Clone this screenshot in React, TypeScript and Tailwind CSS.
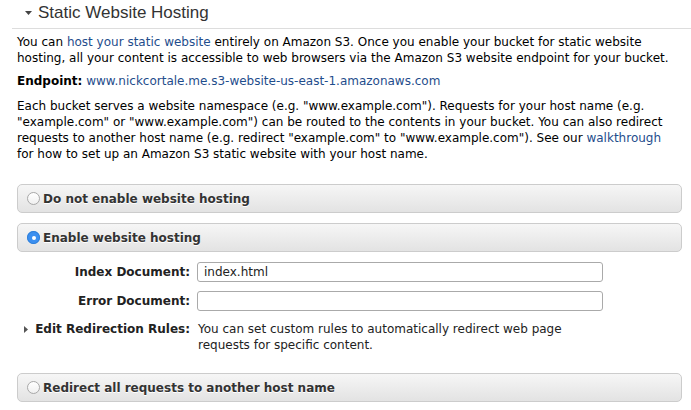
import React from "react";

const verdana = { fontFamily: '"DejaVu Sans", Verdana, sans-serif' };

function Radio({ checked }: { checked?: boolean }) {
  if (checked) {
    return (
      <span className="flex h-[13px] w-[13px] shrink-0 items-center justify-center rounded-full bg-[#3b8ff0] shadow-[inset_0_0_0_1px_#2f7fd8]">
        <span className="h-[4px] w-[4px] rounded-full bg-white" />
      </span>
    );
  }
  return (
    <span className="h-[13px] w-[13px] shrink-0 rounded-full border border-[#a8a8a8] bg-gradient-to-b from-white to-[#f0f0f0]" />
  );
}

function OptionBox({ label, checked, className }: { label: string; checked?: boolean; className?: string }) {
  return (
    <div
      className={
        "flex h-[29px] w-[665px] items-center gap-[3px] rounded-[5px] border border-[#cccccc] bg-gradient-to-b from-[#f6f6f6] to-[#e3e3e3] pl-[9px] " +
        (className ?? "")
      }
    >
      <Radio checked={checked} />
      <span className="whitespace-nowrap text-[12px] font-bold text-[#333] [text-shadow:0_1px_0_#fff]" style={verdana}>
        {label}
      </span>
    </div>
  );
}

export default function App() {
  return (
    <div className="h-[410px] w-[691px] overflow-hidden bg-white text-[#000]" style={verdana}>
      <div className="ml-[12px] flex h-[29px] items-center border-b border-[#dddddd] pl-[13px] pb-[3px]">
        <svg width="7" height="4" viewBox="0 0 7 4" className="mr-[6px]">
          <polygon points="0,0 7,0 3.5,4" fill="#444" />
        </svg>
        <span className="text-[17px] text-[#333]" style={{ fontFamily: '"Liberation Sans", Arial, sans-serif' }}>
          Static Website Hosting
        </span>
      </div>
      <div className="px-[17px]">
        <p className="mt-[5px] text-[12px] leading-[16px]">
          You can <span className="text-[#1f4d8c]">host your static website</span> entirely on Amazon S3. Once you enable your bucket for static website hosting, all your content is accessible to web browsers via the Amazon S3 website endpoint for your bucket.
        </p>
        <p className="mt-[7px] text-[12px] leading-[16px]">
          <span className="font-bold">Endpoint:</span>{" "}
          <span className="text-[#1f4d8c]">www.nickcortale.me.s3-website-us-east-1.amazonaws.com</span>
        </p>
        <p className="mt-[9px] text-[12px] leading-[16px]">
          Each bucket serves a website namespace (e.g. "www.example.com"). Requests for your host name (e.g. "example.com" or "www.example.com") can be routed to the contents in your bucket. You can also redirect requests to another host name (e.g. redirect "example.com" to "www.example.com"). See our <span className="text-[#1f4d8c]">walkthrough</span> for how to set up an Amazon S3 static website with your host name.
        </p>
        <OptionBox className="mt-[22px]" label="Do not enable website hosting" />
        <OptionBox className="mt-[10px]" label="Enable website hosting" checked />
        <div className="mt-[10px] flex items-center">
          <div className="w-[173px] whitespace-nowrap text-right text-[12px] font-bold text-[#222]">Index Document:</div>
          <div className="ml-[7px] flex h-[20px] w-[406px] items-center rounded-[3px] border border-[#aaaaaa] pl-[6px] text-[12px] text-[#222]">
            index.html
          </div>
        </div>
        <div className="mt-[9px] flex items-center">
          <div className="w-[173px] whitespace-nowrap text-right text-[12px] font-bold text-[#222]">Error Document:</div>
          <div className="ml-[7px] h-[20px] w-[406px] rounded-[3px] border border-[#aaaaaa]" />
        </div>
        <div className="mt-[10px] flex items-start">
          <div className="flex w-[173px] items-center justify-end whitespace-nowrap">
            <svg width="4" height="7" viewBox="0 0 4 7" className="mr-[7px]">
              <polygon points="0,0 4,3.5 0,7" fill="#555" />
            </svg>
            <span className="text-[12px] font-bold leading-[16px] text-[#222]">Edit Redirection Rules:</span>
          </div>
          <div className="ml-[8px] text-[12px] leading-[16px] text-[#222]">
            You can set custom rules to automatically redirect web page
            <br />
            requests for specific content.
          </div>
        </div>
        <OptionBox className="mt-[20px]" label="Redirect all requests to another host name" />
      </div>
    </div>
  );
}
